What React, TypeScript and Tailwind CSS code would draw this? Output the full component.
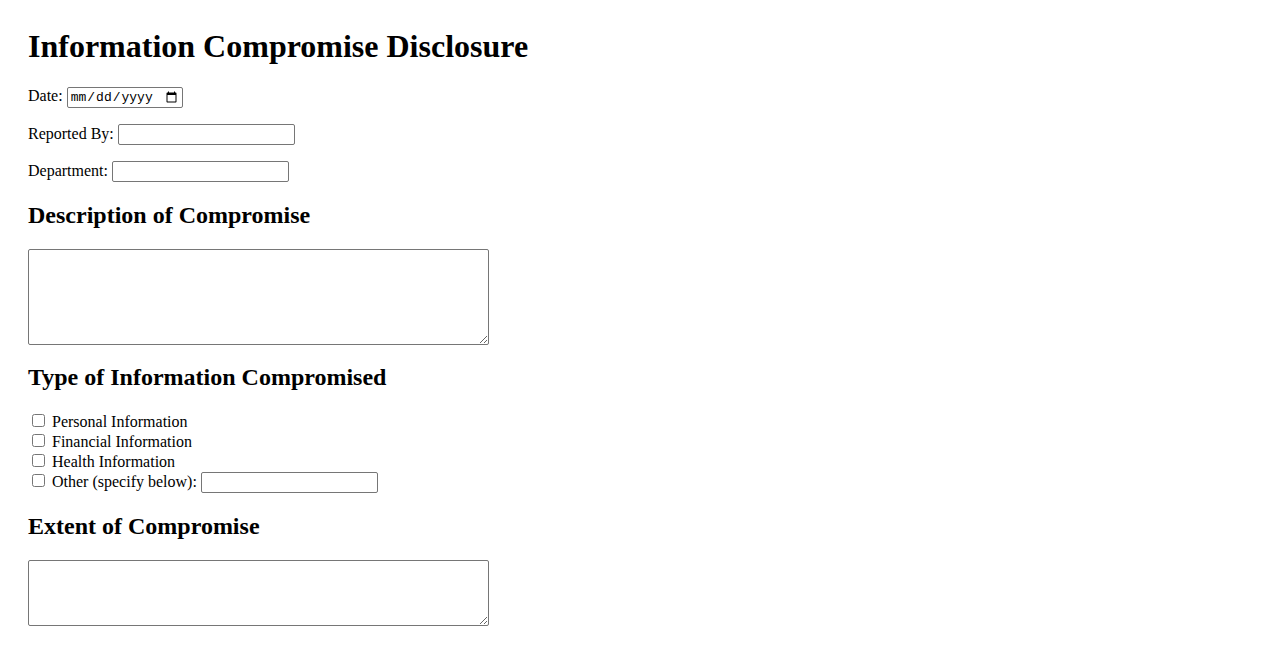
export default function App() {
  const textInput =
    "inline-block align-baseline w-[177px] h-[21px] border border-[#767676] rounded-[2px] px-[2px] py-[1px] bg-white font-['Liberation_Sans',sans-serif] text-[13.33px] leading-[normal]"
  const checkbox = "mt-[3px] mr-[3px] mb-[3px] ml-[4px] w-[13px] h-[13px] align-baseline"

  return (
    <div className="min-h-screen bg-white px-7 pt-7 pb-5 font-['Liberation_Serif',serif] text-base leading-[normal] text-black">
      <h1 className="m-0 mb-[22.44px] text-[32px] leading-[normal] font-bold">Information Compromise Disclosure</h1>

      <form>
        <p className="mb-4">
          <label>Date:</label>{" "}
          <input
            type="date"
            className="inline-block align-baseline w-[116px] h-[21px] border border-[#767676] rounded-[2px] px-[2px] py-[1px] bg-white font-['Liberation_Mono',monospace] text-[13px] leading-[normal]"
          />
        </p>

        <p className="mb-4">
          <label>Reported By:</label> <input type="text" className={textInput} />
        </p>

        <p>
          <label>Department:</label> <input type="text" className={textInput} />
        </p>

        <h2 className="my-[19.92px] text-2xl leading-[normal] font-bold">Description of Compromise</h2>
        <textarea className="block w-[461px] h-[96px] border border-[#767676] rounded-[2px] p-[2px] bg-white font-['Liberation_Mono',monospace] text-[13.33px]" />

        <h2 className="mt-[18.92px] mb-[19.92px] text-2xl leading-[normal] font-bold">Type of Information Compromised</h2>
        <div>
          <input type="checkbox" className={checkbox} /> Personal Information
          <br />
          <input type="checkbox" className={checkbox} /> Financial Information
          <br />
          <input type="checkbox" className={checkbox} /> Health Information
          <br />
          <input type="checkbox" className={checkbox} /> Other (specify below):{" "}
          <input type="text" className={textInput} />
        </div>

        <h2 className="my-[19.92px] text-2xl leading-[normal] font-bold">Extent of Compromise</h2>
        <textarea className="block w-[461px] h-[66px] border border-[#767676] rounded-[2px] p-[2px] bg-white font-['Liberation_Mono',monospace] text-[13.33px]" />
      </form>
    </div>
  )
}
